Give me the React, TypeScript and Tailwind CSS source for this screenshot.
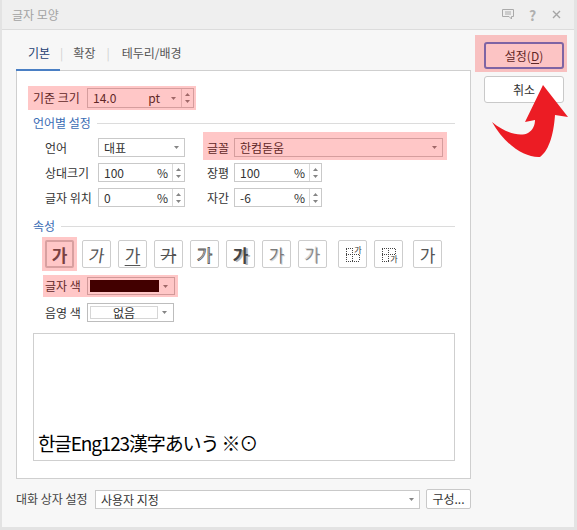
import type { ReactNode } from "react";

// 글자 모양 dialog (한글 word processor)

function Hl({ children, className, inset }: { children: ReactNode; className?: string; inset: string }) {
  return (
    <div className={`relative ${className ?? ""}`}>
      {children}
      <span className={`pointer-events-none absolute bg-[rgba(255,0,0,0.22)] ${inset}`} />
    </div>
  );
}

function Caret({ up }: { up?: boolean }) {
  return (
    <svg width="5" height="3" viewBox="0 0 5 3">
      <path d={up ? "M0 3L2.5 0L5 3Z" : "M0 0L5 0L2.5 3Z"} fill="#858585" />
    </svg>
  );
}

function Spinner() {
  return (
    <div className="flex h-full w-[12px] flex-col items-center justify-center gap-[4px] border-l border-[#d9d9d9]">
      <Caret up />
      <Caret />
    </div>
  );
}

function Select({ value, className }: { value: string; className: string }) {
  return (
    <div className={`flex h-[19px] items-center border border-[#c9c9c9] bg-white ${className}`}>
      <span className="flex-1 truncate pl-[5px] leading-[17px]">{value}</span>
      <span className="flex w-[15px] justify-center">
        <Caret />
      </span>
    </div>
  );
}

function SpinBox({ value, className }: { value: string; className: string }) {
  return (
    <div className={`flex h-[19px] items-center border border-[#c9c9c9] bg-white ${className}`}>
      <span className="flex-1 pl-[5px] leading-[17px]">{value}</span>
      <span className="pr-[4px] leading-[17px]">%</span>
      <Spinner />
    </div>
  );
}

function Section({ title, className }: { title: string; className: string }) {
  return (
    <div className={`ml-[16px] mr-[15px] flex h-[14px] items-center ${className}`}>
      <span className="leading-[14px] text-[#3b6cb4]">{title}</span>
      <div className="ml-[6px] h-px flex-1 bg-[#dcdcdc]" />
    </div>
  );
}

function IconBtn({ children, className }: { children: ReactNode; className?: string }) {
  return (
    <div
      className={`flex h-[28px] w-[29px] items-center justify-center rounded-[2px] border border-[#cdcdcd] bg-white text-[17px] leading-none text-[#555] ${className ?? ""}`}
    >
      {children}
    </div>
  );
}

function ScriptIcon({ sub }: { sub?: boolean }) {
  const dots = "M3 4H16V17H3Z";
  return (
    <svg width="20" height="20" viewBox="0 0 20 20">
      <path d={dots} fill="none" stroke="#444" strokeDasharray="1 1" shapeRendering="crispEdges" />
      <path d="M3 10.5H16" stroke="#444" strokeDasharray="1 1" shapeRendering="crispEdges" />
      <path d="M9.5 4V17" stroke="#444" strokeDasharray="1 1" shapeRendering="crispEdges" />
      <rect x="10.5" y={sub ? 11 : 2} width="9" height="8" fill="#fff" />
      <text x="15" y={sub ? 18 : 9} fontSize="8" textAnchor="middle" fill="#333" fontFamily="Noto Sans CJK KR, sans-serif">
        가
      </text>
    </svg>
  );
}

export default function App() {
  return (
    <div className="relative flex h-[530px] w-[577px] flex-col border-b-[3px] border-l-[2px] border-r-[3px] border-[#e3e3e3] bg-[#f7f7f7] font-['Noto_Sans_CJK_KR','Noto_Sans',sans-serif] text-[12px] text-[#333]">
      {/* title bar */}
      <div className="flex h-[30px] shrink-0 items-center border-b border-[#dcdcdc] bg-[#efefef] pl-[10px] pr-[13px]">
        <span className="leading-none text-[#a3a3a3]">글자 모양</span>
        <div className="ml-auto flex items-center">
          <svg width="12" height="11" viewBox="0 0 12 11">
            <path d="M0.5 0.5H11.5V7.5H9.5V10L7 7.5H0.5Z" fill="none" stroke="#aaa" />
            <line x1="3" y1="3" x2="9" y2="3" stroke="#aaa" />
            <line x1="3" y1="5" x2="9" y2="5" stroke="#aaa" />
          </svg>
          <span className="ml-[14px] w-[9px] text-center text-[14px] font-bold leading-none text-[#b0b0b0]">?</span>
          <svg className="ml-[15px]" width="9" height="9" viewBox="0 0 9 9">
            <path d="M1 1L8 8M8 1L1 8" stroke="#a5a5a5" strokeWidth="1.4" />
          </svg>
        </div>
      </div>

      <div className="flex flex-1">
        {/* left: tabs */}
        <div className="ml-[14px] flex w-[455px] flex-col">
          <div className="relative z-10 flex h-[41px] items-stretch text-[12px]">
            <div className="flex items-center border-b-2 border-[#4a7fc4] pb-[2px] pl-[12px] pr-[10px] pt-[9px] text-[#1d3f73]">기본</div>
            <div className="flex items-center border-b-2 border-transparent pb-[2px] pt-[9px] text-[#d0d0d0]">|</div>
            <div className="flex items-center border-b-2 border-transparent pb-[2px] pl-[10px] pr-[11px] pt-[9px] text-[#555]">확장</div>
            <div className="flex items-center border-b-2 border-transparent pb-[2px] pt-[9px] text-[#d0d0d0]">|</div>
            <div className="flex items-center border-b-2 border-transparent pb-[2px] pl-[12px] pt-[9px] text-[#555]">테두리/배경</div>
          </div>

          <div className="mt-[-1px] flex h-[409px] flex-col border border-[#cfcfcf] bg-white">
            {/* 기준 크기 */}
            <Hl className="ml-[16px] mt-[17px] flex h-[20px] w-[161px] items-center" inset="left-[-5px] right-[-2px] top-[-2px] bottom-[-2px]">
              <span className="w-[54px] leading-[20px]">기준 크기</span>
              <div className="flex h-[20px] w-[107px] items-center border border-[#c9c9c9] bg-white">
                <span className="flex-1 pl-[5px] leading-[18px]">14.0</span>
                <span className="pr-[5px] leading-[18px]">pt</span>
                <span className="flex w-[16px] justify-center">
                  <Caret />
                </span>
                <Spinner />
              </div>
            </Hl>

            <Section title="언어별 설정" className="mt-[8px]" />

            <div className="ml-[28px] mt-[8px] flex h-[19px] items-center">
              <span className="w-[53px]">언어</span>
              <Select value="대표" className="w-[87px]" />
              <Hl className="ml-[22px] flex h-[19px] items-center" inset="left-[-4px] right-[-4px] top-[-6px] bottom-[-3px]">
                <span className="w-[27px]">글꼴</span>
                <Select value="한컴돋움" className="w-[209px]" />
              </Hl>
            </div>

            <div className="ml-[28px] mt-[6px] flex h-[19px] items-center">
              <span className="w-[53px]">상대크기</span>
              <SpinBox value="100" className="w-[87px]" />
              <span className="ml-[22px] w-[27px]">장평</span>
              <SpinBox value="100" className="w-[88px]" />
            </div>

            <div className="ml-[28px] mt-[6px] flex h-[19px] items-center">
              <span className="w-[53px]">글자 위치</span>
              <SpinBox value="0" className="w-[87px]" />
              <span className="ml-[22px] w-[27px]">자간</span>
              <SpinBox value="-6" className="w-[88px]" />
            </div>

            <Section title="속성" className="mt-[12px]" />

            <div className="ml-[25px] mt-[4px] flex items-center">
              <div className="relative p-[3px]">
                <IconBtn className="border-2 border-[#5a80d2] bg-[#cdd8ee] font-bold text-[#333]">가</IconBtn>
                <span className="pointer-events-none absolute inset-0 bg-[rgba(255,0,0,0.22)]" />
              </div>
              <IconBtn className="ml-[5px]">
                <span className="inline-block [transform:skewX(-8deg)]">가</span>
              </IconBtn>
              <IconBtn className="ml-[7px]">
                <span className="underline decoration-1 underline-offset-[3px]">가</span>
              </IconBtn>
              <IconBtn className="ml-[7px]">
                <span className="line-through decoration-1">가</span>
              </IconBtn>
              <IconBtn className="ml-[7px]">
                <span className="text-transparent [-webkit-text-stroke:0.8px_#555]">가</span>
              </IconBtn>
              <IconBtn className="ml-[7px]">
                <span className="font-bold text-[#444] [text-shadow:2px_1px_0_#b5b5b5]">가</span>
              </IconBtn>
              <IconBtn className="ml-[7px]">
                <span className="text-[#7a7a7a] [text-shadow:1px_1px_0_#d5d5d5]">가</span>
              </IconBtn>
              <IconBtn className="ml-[7px]">
                <span className="text-[#8a8a8a] [text-shadow:-1px_-1px_0_#dcdcdc]">가</span>
              </IconBtn>
              <IconBtn className="ml-[11px]">
                <ScriptIcon />
              </IconBtn>
              <IconBtn className="ml-[7px]">
                <ScriptIcon sub />
              </IconBtn>
              <IconBtn className="ml-[10px]">가</IconBtn>
            </div>

            <Hl className="ml-[28px] mt-[6px] flex h-[18px] w-[130px] items-center" inset="left-[-2px] right-[-3px] top-[-2px] bottom-[-2px]">
              <span className="w-[42px]">글자 색</span>
              <div className="flex h-[18px] w-[88px] items-center border border-[#c4c4c4] bg-white p-[2px]">
                <div className="h-full w-[69px] bg-[#0e0000]" />
                <span className="flex flex-1 justify-center">
                  <Caret />
                </span>
              </div>
            </Hl>

            <div className="ml-[28px] mt-[8px] flex h-[19px] items-center">
              <span className="w-[42px]">음영 색</span>
              <div className="flex h-[19px] w-[87px] items-center border border-[#bdbdbd] bg-white p-[2px]">
                <div className="flex h-full w-[68px] items-center justify-center border border-[#d6d6d6] leading-none">없음</div>
                <span className="flex flex-1 justify-center">
                  <Caret />
                </span>
              </div>
            </div>

            <div className="ml-[16px] mt-[11px] flex h-[128px] w-[422px] items-end border border-[#cfcfcf] bg-white pb-[5px] pl-[4px]">
              <span className="text-[19px] font-normal leading-[24px] tracking-[-0.06em] text-black">한글Eng123漢字あいう ※⊙</span>
            </div>
          </div>

          <div className="mt-[10px] flex h-[20px] items-center">
            <span className="w-[79px] text-[#444]">대화 상자 설정</span>
            <Select value="사용자 지정" className="w-[325px]" />
            <div className="ml-[6px] flex h-[20px] w-[45px] items-center justify-center rounded-[2px] border border-[#c9c9c9] bg-white leading-none">
              구성...
            </div>
          </div>
        </div>

        {/* right: buttons */}
        <div className="ml-[13px] flex w-[80px] flex-col">
          <Hl className="mt-[12px]" inset="left-[-9px] right-[-3px] top-[-7px] bottom-[-3px]">
            <div className="flex h-[27px] items-center justify-center rounded-[3px] border-2 border-[#5a80d2] bg-[#fbfbfb] leading-none">
              설정(<span className="underline underline-offset-2">D</span>)
            </div>
          </Hl>
          <div className="mt-[7px] flex h-[27px] items-center justify-center rounded-[3px] border border-[#c9c9c9] bg-white leading-none">
            취소
          </div>
        </div>
      </div>

      {/* red arrow pointing at 설정 */}
      <svg className="pointer-events-none absolute left-[478px] top-[75px]" width="100" height="95" viewBox="0 0 100 95">
        <path
          d="M63 10 L88 42 L75 40 C74 56 70 75 60 82 C45 83 25 70 12 47 C25 58 40 62 48 58 C53 55 55 50 55 45 L45 47 Z"
          fill="#ec1c24"
        />
      </svg>
    </div>
  );
}
